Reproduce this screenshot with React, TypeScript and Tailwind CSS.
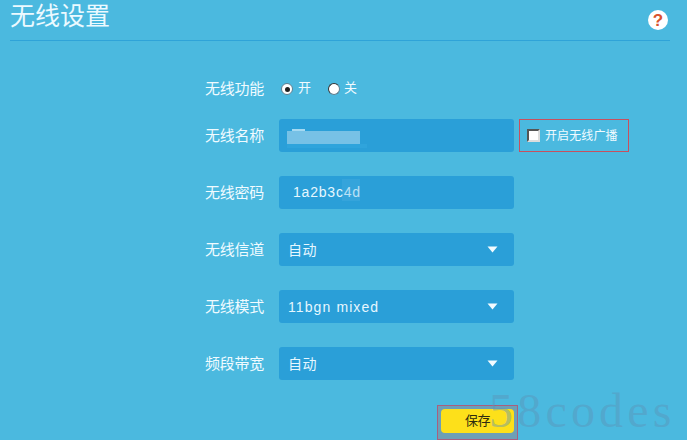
const CJK = "font-['Liberation_Sans','Noto_Sans_CJK_SC',sans-serif]";

function Row({ label, children, extra }: { label: string; children: React.ReactNode; extra?: React.ReactNode }) {
  return (
    <div className="flex items-center h-[33px]">
      <label className="w-[74px] text-[15px] tracking-[-0.25px] text-[#f0fbff] leading-[33px]">{label}</label>
      <div className="relative flex items-center w-[235px] h-[33px] rounded-[3px] bg-[#2a9fd8] text-[14px] text-[#e6f7ff]">
        {children}
      </div>
      {extra}
    </div>
  );
}

function Select({ value, wide }: { value: string; wide?: boolean }) {
  return (
    <>
      <span className={wide ? "pl-[9px] pt-[1px] tracking-[1.1px]" : "pl-[9px] pt-[1px] tracking-[0.6px]"}>{value}</span>
      <svg className="absolute left-[208px] top-[13px]" width="11" height="7" viewBox="0 0 11 7">
        <path d="M0.5 0.5H10.5L5.5 6.5Z" fill="#f2fbff" />
      </svg>
    </>
  );
}

function Radio({ checked }: { checked: boolean }) {
  return (
    <span className={checked
      ? "flex items-center justify-center w-[12px] h-[12px] rounded-full bg-white border border-[#5f7f90]"
      : "flex items-center justify-center w-[12px] h-[12px] rounded-full bg-white border border-[#5f7f90] border-l-[#333] border-t-[#333]"}>
      {checked && <span className="w-[5px] h-[5px] rounded-full bg-[#222]" />}
    </span>
  );
}

export default function App() {
  return (
    <div className={`relative w-[687px] h-[440px] overflow-hidden bg-[#4bb9df] ${CJK}`}>
      <header className="flex items-center justify-between mx-[10px] w-[660px] h-[41px] border-b border-[#2fa3d8]">
        <h1 className="text-[25px] leading-[32px] -mt-[8px] font-normal text-[#ecfaff]">无线设置</h1>
        <span className="flex items-center justify-center w-[20px] h-[20px] mr-[2px] rounded-full bg-white text-[17px] font-bold text-[#d9532c] leading-none">?</span>
      </header>

      <main className="flex flex-col pl-[205px]">
        <div className="flex items-center h-[20px] mt-[38px] mb-[20px] text-[#f0fbff] text-[14px]">
          <span className="w-[76px] text-[15px] tracking-[-0.25px]">无线功能</span>
          <Radio checked />
          <span className="ml-[5px] text-[13px] w-[30px] -mt-[2px]">开</span>
          <Radio checked={false} />
          <span className="ml-[4px] text-[13px] -mt-[2px]">关</span>
        </div>

        <div className="flex flex-col gap-[24px]">
          <Row
            label="无线名称"
            extra={
              <div className="flex items-center h-[33px] w-[110px] ml-[5px] border border-[#c8505f] text-[12px] text-[#f0fbff]">
                <span className="w-[13px] h-[13px] ml-[7px] bg-white border-2 border-l-[#555] border-t-[#555] border-r-[#ddd] border-b-[#ddd]" />
                <span className="ml-[5px] tracking-[0.1px]">开启无线广播</span>
              </div>
            }
          >
            <span className="absolute left-[8px] top-[12px] w-[73px] h-[13px] bg-[#77c1e6]" />
            <span className="absolute left-[8px] top-[25px] w-[80px] h-[4px] bg-[#2fa4dc]" />
            <span className="absolute left-[13px] top-[10px] w-[13px] h-[2px] bg-[#a5d9f2]" />
          </Row>
          <Row label="无线密码">
            <span className="pl-[14px] tracking-[0.8px]">1a2b3c4d</span>
            <span className="absolute left-[63px] top-[3px] w-[18px] h-[22px] bg-[#4fb1e2]/30" />
          </Row>
          <Row label="无线信道"><Select value="自动" /></Row>
          <Row label="无线模式"><Select value="11bgn mixed" wide /></Row>
          <Row label="频段带宽"><Select value="自动" /></Row>
        </div>

        <div className="flex mt-[25px] ml-[232px]">
          <div className="w-[81px] h-[35px] p-[3px] border border-[#a8607f] bg-[#6d9fb6]">
            <button className="block w-[73px] h-[24px] rounded-[4px] bg-[#fde01a] text-[13px] tracking-[-0.5px] leading-[24px] text-[#2e2c10]">保存</button>
          </div>
        </div>
      </main>

      <span className="absolute left-[489px] top-[381px] text-[48px] leading-[60px] tracking-[4.2px] text-[#5b93b8]/45 font-['Liberation_Serif',serif]">58codes</span>
    </div>
  );
}
